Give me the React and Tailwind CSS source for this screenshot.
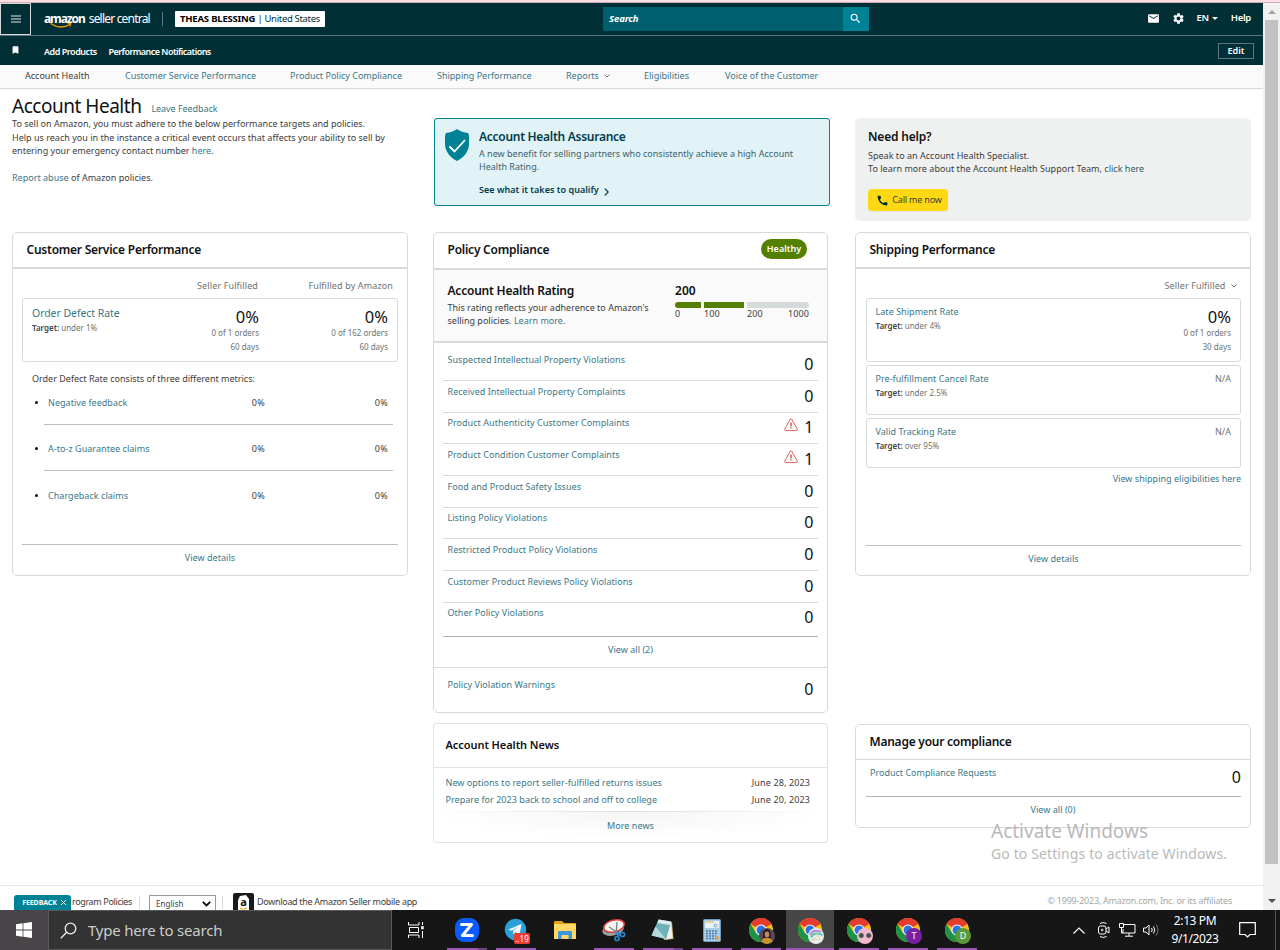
import { MdBookmark, MdCall, MdEmail, MdSearch, MdSettings } from "react-icons/md"

const tabs = [
    "Account Health",
    "Customer Service Performance",
    "Product Policy Compliance",
    "Shipping Performance",
    "Reports",
    "Eligibilities",
    "Voice of the Customer",
]

const violations = [
    { name: "Suspected Intellectual Property Violations", count: 0 },
    { name: "Received Intellectual Property Complaints", count: 0 },
    { name: "Product Authenticity Customer Complaints", count: 1 },
    { name: "Product Condition Customer Complaints", count: 1 },
    { name: "Food and Product Safety Issues", count: 0 },
    { name: "Listing Policy Violations", count: 0 },
    { name: "Restricted Product Policy Violations", count: 0 },
    { name: "Customer Product Reviews Policy Violations", count: 0 },
    { name: "Other Policy Violations", count: 0 },
]

const defectMetrics = ["Negative feedback", "A-to-z Guarantee claims", "Chargeback claims"]

function Chevron({ className }) {
    return (
        <svg className={className} viewBox="0 0 6 4" fill="none" stroke="currentColor">
            <path d="M0.5 0.5 L3 3 L5.5 0.5" />
        </svg>
    )
}

function WarningIcon() {
    return (
        <svg className="w-[14px] h-[13px]" viewBox="0 0 14 13" fill="none" stroke="#dc3c3c">
            <path d="M6.3 1 Q7 0 7.7 1 L13.2 11 Q13.6 12.3 12.5 12.5 L1.5 12.5 Q0.4 12.3 0.8 11 Z" strokeWidth="0.8" />
            <path d="M7 4.5 V8.5 M7 9.3 V10.5" strokeWidth="1.3" />
        </svg>
    )
}

function Header() {
    return (
        <header className="bg-[#002f36] text-white shrink-0">
            <div className="flex h-[33px] border-b border-[#5c777c] items-start">
                <button className="w-[31px] h-[32px] border border-[#d5dbdb] flex items-center justify-center shrink-0">
                    <svg className="w-[10px] h-[8px]" viewBox="0 0 10 8" stroke="#fff">
                        <path d="M0 1 H10 M0 4 H10 M0 7 H10" strokeWidth="0.9" />
                    </svg>
                </button>
                {/* Logo */}
                <div className="relative ml-[13px] w-[118px] h-[31px] flex items-center gap-[4px] text-[12px] whitespace-nowrap">
                    <span className="font-bold tracking-[-1.1px]">amazon</span>
                    <span className="tracking-[-0.8px]">seller central</span>
                    <svg className="absolute left-[6px] top-[20px] w-[22px] h-[6px]" viewBox="0 0 22 6" fill="none" stroke="#ff9900">
                        <path d="M0.5 0.5 Q10 7 20 1.5" strokeWidth="1.3" />
                        <path d="M17.5 0.7 L21 0.5 L20 3.6" strokeWidth="1" />
                    </svg>
                </div>
                <div className="w-px h-[14px] bg-[#5c777c] mt-[9px]" />
                <div className="ml-[12px] mt-[8px] w-[150px] h-[16px] bg-white rounded-[1px] text-black text-[9.5px] leading-[15px] pl-[5px] whitespace-nowrap">
                    <strong className="font-bold tracking-[-0.2px]">THEAS BLESSING</strong>
                    <span className="text-[#002f36] tracking-[-0.32px]"> | United States</span>
                </div>
                <div className="ml-[278px] mt-[4px] h-[24px] flex">
                    <div className="w-[240px] bg-[#005f6e] pl-[6px] leading-[23px] text-[9.5px] tracking-[-0.1px] font-bold italic">Search</div>
                    <div className="w-[26px] bg-[#008296] flex items-center justify-center">
                        <MdSearch className="w-[13px] h-[13px] mr-[2px] mb-[1px]" />
                    </div>
                </div>
                <div className="ml-auto h-[30px] pr-[12px] flex items-center text-[9.5px] font-semibold tracking-[-0.3px]">
                    <MdEmail className="w-[13px] h-[13px]" />
                    <MdSettings className="ml-[12px] w-[13px] h-[13px]" />
                    <span className="ml-[12px]">EN</span>
                    <span className="ml-[3px] w-0 h-0 border-x-[3px] border-x-transparent border-t-[3px] border-t-white" />
                    <span className="ml-[13px]">Help</span>
                </div>
            </div>
            <div className="flex items-center h-[29px] text-[9px] font-semibold whitespace-nowrap">
                <MdBookmark className="ml-[10px] w-[11px] h-[10px] mb-[1px]" />
                <span className="ml-[23px] w-[64.5px] pt-[2px] tracking-[-0.47px]">Add Products</span>
                <span className="pt-[2px] tracking-[-0.54px]">Performance Notifications</span>
                <button className="ml-auto mr-[9px] w-[36px] h-[16px] border border-[#5c777c] flex items-center justify-center">Edit</button>
            </div>
        </header>
    )
}

function Card({ title, badge, className, headClass, children }) {
    return (
        <section className={`border border-[#d5dbdb] rounded-[5px] flex flex-col ${className}`}>
            <div className={`pl-[13.5px] pr-[20px] flex items-center justify-between border-[#d5dbdb] ${headClass}`}>
                <h2 className="text-[12px] leading-[16px] font-semibold tracking-[-0.24px] text-[#111]">{title}</h2>
                {badge}
            </div>
            {children}
        </section>
    )
}

function Rate({ value, orders, days, className }) {
    return (
        <div className={`shrink-0 text-right text-[8px] leading-[14px] tracking-normal text-[#6b7373] ${className}`}>
            <div className="text-[16.5px] leading-[18px] text-[#111]">{value}</div>
            <div>{orders}</div>
            <div>{days}</div>
        </div>
    )
}

function Target({ children }) {
    return <div className="text-[8px] leading-[14px] tracking-normal text-[#6b7373]"><strong className="font-semibold text-[#444]">Target:</strong> {children}</div>
}

function CustomerService() {
    return (
        <Card title="Customer Service Performance" className="h-[344px]" headClass="h-[36px] border-b-2">
            <div className="flex text-[#6b7373] h-[29px] pt-[10px] leading-[14px] text-right tracking-[0.12px]">
                <span className="w-[245px]">Seller Fulfilled</span>
                <span className="w-[135px]">Fulfilled by Amazon</span>
            </div>
            <div className="mx-[9px] h-[64px] border border-[#d5dbdb] rounded-[3px] flex pl-[9px] whitespace-nowrap">
                <div className="pt-[7px]">
                    <div className="text-[10.5px] leading-[15px] tracking-[-0.06px] text-[#3a7886]">Order Defect Rate</div>
                    <Target>under 1%</Target>
                </div>
                <Rate className="ml-auto w-[120px] pt-[9px]" value="0%" orders="0 of 1 orders" days="60 days" />
                <Rate className="w-[129px] pt-[9px] mr-[9px]" value="0%" orders="0 of 162 orders" days="60 days" />
            </div>
            <p className="pl-[19px] mt-[10px] leading-[14px] tracking-normal">Order Defect Rate consists of three different metrics:</p>
            <ul className="ml-[31px] mr-[14px] mt-[10px]">
                {defectMetrics.map(name => (
                    <li key={name} className="h-[29px] mb-[17.3px] border-b border-[#b9bfbf] last:border-b-0 flex items-start leading-[14px]">
                        <span className="w-[3px] h-[3px] rounded-full bg-[#111] -ml-[9px] mt-[5px]" />
                        <span className="ml-[10px] w-[130px] text-[#3a7886]">{name}</span>
                        <span className="w-[87px] text-right tracking-[0.3px]">0%</span>
                        <span className="w-[123px] text-right tracking-[0.3px]">0%</span>
                    </li>
                ))}
            </ul>
            <div className="mt-auto mx-[9px] h-[31px] border-t border-[#b9bfbf] pt-[6px] text-center leading-[14px] text-[#3a7886]">View details</div>
        </Card>
    )
}

function AssuranceBanner() {
    return (
        <div className="ml-px w-[396px] h-[88px] rounded-[3px] border border-[#008296] bg-[#e1f3f7] flex text-[#3d626c]">
            <svg className="ml-[10px] mt-[10px] w-[24px] h-[32px] shrink-0" viewBox="0 0 24 32">
                <path d="M12 0 C15 2.5 19 3.5 23 4 Q24 5 24 8 V15 C24 23 18 29 12 32 C6 29 0 23 0 15 V8 Q0 5 1 4 C5 3.5 9 2.5 12 0 Z" fill="#008296" />
                <path d="M4.5 17.5 L9.5 22.5 L20 11" fill="none" stroke="#fff" strokeWidth="1.8" />
            </svg>
            <div className="ml-[10px] pt-[10px] whitespace-nowrap">
                <h2 className="text-[12px] leading-[16px] font-semibold tracking-[-0.28px] text-[#003b49]">Account Health Assurance</h2>
                <p className="mt-[2px] leading-[13px] tracking-[0.01px]">A new benefit for selling partners who consistently achieve a high Account<br />Health Rating.</p>
                <div className="mt-[10px] leading-[14px] font-semibold text-[#003b49] flex items-center gap-[5px]">
                    See what it takes to qualify
                    <svg className="w-[5px] h-[8px] mt-[3px]" viewBox="0 0 5 8" fill="none" stroke="currentColor">
                        <path d="M0.8 0.6 L4.2 4 L0.8 7.4" strokeWidth="1.3" />
                    </svg>
                </div>
            </div>
        </div>
    )
}

function PolicyCompliance() {
    return (
        <Card
            title="Policy Compliance"
            className="w-[395px] h-[481px] mt-[26px]"
            headClass="h-[37px] pb-[1px] border-b-2"
            badge={<span className="w-[46px] h-[20px] mb-[2px] rounded-full bg-[#538000] text-white text-[9px] font-semibold flex items-center justify-center">Healthy</span>}
        >
            <div className="h-[73px] bg-[#fafafa] border-b-2 border-[#d5dbdb] flex pl-[13.5px] pt-[13px]">
                <div className="w-[227.5px] whitespace-nowrap">
                    <h3 className="text-[12px] leading-[16px] font-semibold tracking-[-0.22px] text-[#111]">Account Health Rating</h3>
                    <p className="mt-[2px] leading-[13px] tracking-[0.01px]">This rating reflects your adherence to Amazon's<br />selling policies. <a className="text-[#3a7886]">Learn more</a>.</p>
                </div>
                <div className="w-[134px]">
                    <div className="text-[12px] leading-[16px] font-semibold text-[#111]">200</div>
                    <div className="mt-[3px] h-[6px] flex gap-[3px]">
                        <span className="w-[26px] bg-[#538000] rounded-l-[3px]" />
                        <span className="w-[40px] bg-[#538000]" />
                        <span className="w-[62px] bg-[#d5dbdb] rounded-r-[3px]" />
                    </div>
                    <div className="flex leading-[12px] tracking-[0.1px]">
                        <span className="w-[29px]">0</span>
                        <span className="w-[43px]">100</span>
                        <span>200</span>
                        <span className="ml-auto">1000</span>
                    </div>
                </div>
            </div>
            <div className="pt-[6.3px] mx-[9px]">
                {violations.map(v => (
                    <div key={v.name} className="h-[31.7px] border-b border-[#d5dbdb] last:border-[#b0b7b7] last:h-[34.1px] flex items-start pl-[4.5px] pr-[4.5px]">
                        <span className="mt-[3.6px] leading-[14px] text-[#3a7886]">{v.name}</span>
                        <span className="ml-auto flex items-center gap-[6px] text-[16px] leading-[18px] mt-[5.7px] text-[#111]">
                            {v.count > 0 && <span className="-mt-[5px]"><WarningIcon /></span>}
                            {v.count}
                        </span>
                    </div>
                ))}
            </div>
            <div className="h-[31px] border-b border-[#d5dbdb] pt-[6px] text-center leading-[14px] text-[#3a7886]">View all (2)</div>
            <div className="flex items-start justify-between pl-[13.5px] pr-[13.5px]">
                <span className="mt-[10px] leading-[14px] text-[#3a7886]">Policy Violation Warnings</span>
                <span className="mt-[12px] text-[16px] leading-[18px] text-[#111]">0</span>
            </div>
        </Card>
    )
}

function News() {
    return (
        <section className="mt-[10px] w-[395px] h-[120px] border border-[#dfe3e3] rounded-[3px]">
            <h2 className="h-[44px] border-b border-[#dfe3e3] pl-[11.5px] text-[11px] leading-[42px] font-semibold tracking-[-0.06px] text-[#111]">Account Health News</h2>
            <div className="pt-[6px] pl-[11.5px] pr-[17px] leading-[17px]">
                <div className="flex justify-between"><span className="text-[#3a7886]">New options to report seller-fulfilled returns issues</span><span className="tracking-[0.12px]">June 28, 2023</span></div>
                <div className="flex justify-between"><span className="text-[#3a7886]">Prepare for 2023 back to school and off to college</span><span className="tracking-[0.12px]">June 20, 2023</span></div>
            </div>
            <div className="mt-[3px] h-px bg-linear-to-r from-white via-[#dcdcdc] to-white" />
            <div className="h-[27px] bg-radial-[at_50%_0%] from-[#f5f5f5] to-white to-70% text-center leading-[28px] text-[#3a7886]">More news</div>
        </section>
    )
}

function ShippingMetric({ name, target, className, children }) {
    return (
        <div className={`mx-[10px] w-[375px] border border-[#d5dbdb] rounded-[3px] flex justify-between pl-[8.5px] pr-[9px] pt-[6px] ${className}`}>
            <div>
                <div className="leading-[14px] text-[#3a7886]">{name}</div>
                <Target>{target}</Target>
            </div>
            {children}
        </div>
    )
}

function Shipping() {
    return (
        <Card title="Shipping Performance" className="mt-[11px] h-[344px]" headClass="h-[36px] border-b-2">
            <div className="h-[29px] pt-[10px] pr-[13.5px] leading-[14px] flex items-start justify-end gap-[5px] text-[#6b7373] tracking-[0.12px]">
                Seller Fulfilled
                <Chevron className="w-[6px] h-[4px] mt-[5px]" />
            </div>
            <ShippingMetric name="Late Shipment Rate" target="under 4%" className="h-[64px]">
                <Rate className="pt-[3px]" value="0%" orders="0 of 1 orders" days="30 days" />
            </ShippingMetric>
            <ShippingMetric name="Pre-fulfillment Cancel Rate" target="under 2.5%" className="h-[50px] mt-[3px]">
                <span className="leading-[14px] text-[#6b7373]">N/A</span>
            </ShippingMetric>
            <ShippingMetric name="Valid Tracking Rate" target="over 95%" className="h-[50px] mt-[3px]">
                <span className="leading-[14px] text-[#6b7373]">N/A</span>
            </ShippingMetric>
            <div className="mt-[4px] pr-[9px] text-right leading-[14px] tracking-[0.02px] text-[#3a7886]">View shipping eligibilities here</div>
            <div className="mt-auto ml-[10px] mr-[9px] h-[30px] border-t border-[#b9bfbf] pt-[6px] text-center leading-[14px] text-[#3a7886]">View details</div>
        </Card>
    )
}

function Footer() {
    return (
        <footer className="mt-auto h-[25px] border-t border-[#e3e6e6] flex items-start whitespace-nowrap shrink-0">
            <div className="ml-[14px] mt-[9px] w-[57px] h-[15px] rounded-t-[3px] bg-[#008296] text-white text-[7px] leading-[15px] font-bold tracking-[-0.1px] pl-[3px] flex justify-center gap-[4px]">
                FEEDBACK
                <svg className="w-[5px] h-[5px] mt-[5px]" viewBox="0 0 5 5" stroke="#fff"><path d="M0 0 L5 5 M5 0 L0 5" strokeWidth="0.9" /></svg>
            </div>
            <span className="ml-px mt-[9px] w-[67px] leading-[14px] tracking-[-0.36px]">rogram Policies</span>
            <span className="w-px h-[13px] mt-[10px] bg-[#d5dbdb]" />
            <div className="ml-[9px] mt-[9px] w-[67px] h-[15px] border border-b-0 border-[#9a9a9a] flex items-start justify-between pl-[6px] pr-[4px] text-[8px] leading-[15px]">
                English
                <svg className="w-[9px] h-[6px] mt-[5px]" viewBox="0 0 9 6" fill="none" stroke="#111"><path d="M0.8 0.8 L4.5 4.5 L8.2 0.8" strokeWidth="1.9" /></svg>
            </div>
            <span className="ml-[6px] w-px h-[13px] mt-[10px] bg-[#d5dbdb]" />
            <svg className="ml-[10px] mt-[7px] w-[21px] h-[17px]" viewBox="0 0 21 17">
                <path d="M0 2 Q0 0 2 0 H19 Q21 0 21 2 V17 H0 Z" fill="#191919" />
                <path d="M7 3 L13 2 L16 6 V17 H5 V7 Z" fill="#fff" />
                <text x="10.5" y="13" fontSize="11" fontWeight="bold" textAnchor="middle" fill="#111" fontFamily="Noto Sans">a</text>
                <path d="M7 15 Q10.500 17.500 14 15" stroke="#ff9900" fill="none" />
            </svg>
            <span className="ml-[3px] mt-[9px] leading-[14px] tracking-[-0.31px]">Download the Amazon Seller mobile app</span>
            <span className="ml-auto mr-[31px] mt-[8px] leading-[14px] tracking-[-0.24px] text-[#a3a8a8]">© 1999-2023, Amazon.com, Inc. or its affiliates</span>
        </footer>
    )
}

function ChromeIcon({ badge }) {
    return (
        <svg className="w-[26px] h-[26px] ml-[2px] mt-[2px]" viewBox="0 0 26 26">
            <circle cx="12" cy="12" r="12" fill="#fbc116" />
            <path d="M12 12 L1.600 6 A12 12 0 0 1 22.400 6 Z" fill="#e33b2e" />
            <path d="M1.600 6 A12 12 0 0 0 12 24 L17 15 L12 12 L7 15 Z" fill="#1e9245" />
            <circle cx="12" cy="12" r="5.600" fill="#fff" />
            <circle cx="12" cy="12" r="4.500" fill="#2a74e8" />
            {badge}
        </svg>
    )
}

function LetterBadge({ letter, color }) {
    return (
        <>
            <circle cx="18" cy="18" r="8" fill={color} />
            <text x="18" y="21.200" fontSize="9" textAnchor="middle" fill="#fff" fontFamily="Noto Sans">{letter}</text>
        </>
    )
}

const photoBadge = (
    <>
        <circle cx="18" cy="18" r="8" fill="#5b4a5c" />
        <path d="M12 23 Q18 16 24 23 Q18 29 12 23 Z" fill="#c9962b" />
        <path d="M14 14 Q18 8 21.500 14 L22 20 H14 Z" fill="#2c1c1a" />
        <ellipse cx="18" cy="16.500" rx="2.300" ry="3" fill="#c08a6d" />
    </>
)

const rainbowBadge = (
    <>
        <circle cx="18" cy="18" r="8" fill="#e8ecea" />
        <path d="M12 17 Q15 10.500 23 14" fill="none" stroke="#b48ad6" strokeWidth="2" />
        <path d="M13 19.500 Q16 13 24.500 17" fill="none" stroke="#63c9b4" strokeWidth="2.200" />
        <path d="M14 22 L20 17.500 L22 21 Z" fill="#f3f3ee" stroke="#d9b796" strokeWidth="0.600" />
    </>
)

const glassesBadge = (
    <>
        <circle cx="18" cy="18" r="8" fill="#f6b8cf" />
        <circle cx="14.300" cy="17.500" r="2.700" fill="#454a50" stroke="#d7c7cc" strokeWidth="0.600" />
        <circle cx="21.700" cy="17.500" r="2.700" fill="#454a50" stroke="#d7c7cc" strokeWidth="0.600" />
    </>
)

const apps = [
    {
        id: "zoom", bar: "split", icon: (
            <svg className="w-[24px] h-[24px]" viewBox="0 0 24 24">
                <rect width="24" height="24" rx="9" fill="#0b5cff" />
                <path d="M6.500 6.500 H16.500 L7.500 17.500 H17.500" fill="none" stroke="#fff" strokeWidth="3" strokeLinejoin="round" strokeLinecap="round" />
            </svg>
        )
    },
    {
        id: "telegram", bar: "full", icon: (
            <svg className="w-[26px] h-[26px] ml-[2px] mt-[2px]" viewBox="0 0 26 26">
                <circle cx="11.500" cy="11.500" r="10.700" fill="#2a9fd8" />
                <path d="M4.500 11.500 L17.500 6 L15.500 17 L11.500 14 L9.500 16.500 L9 13 L14.500 8.500 L7.500 12.800 Z" fill="#fff" />
                <rect x="10" y="15" width="16" height="11" rx="2" fill="#ef3b36" />
                <text x="18" y="23.500" fontSize="8" textAnchor="middle" fill="#fff" fontFamily="Noto Sans">..19</text>
            </svg>
        )
    },
    {
        id: "explorer", bar: "none", icon: (
            <svg className="w-[22px] h-[20px]" viewBox="0 0 22 20">
                <path d="M0 2 Q0 1 1 1 H8 L10 3 H21 Q22 3 22 4 V19 H0 Z" fill="#e3a21a" />
                <rect y="4" width="22" height="15" fill="#ffd866" />
                <path d="M4 19 V12 Q4 11 5 11 H17 Q18 11 18 12 V19 H14.500 V15 H7.500 V19 Z" fill="#3c97dc" />
            </svg>
        )
    },
    {
        id: "snip", bar: "full", icon: (
            <svg className="w-[24px] h-[24px]" viewBox="0 0 24 24" fill="none">
                <ellipse cx="11" cy="11.500" rx="11" ry="6" fill="#98a0a6" transform="rotate(-14 11 11)" />
                <ellipse cx="12" cy="8" rx="10.500" ry="6" fill="#f4f4f4" stroke="#df3a35" strokeWidth="1.500" transform="rotate(-14 12 8)" />
                <path d="M7 9 L18 16 M15 4 L14 17" stroke="#808080" strokeWidth="1.300" />
                <circle cx="15" cy="20.500" r="2.100" stroke="#2a8ad4" strokeWidth="1.500" />
                <circle cx="20.500" cy="16.500" r="2.100" stroke="#2a8ad4" strokeWidth="1.500" />
                <path d="M13.500 15 L18.500 17.500 M17 13 L15.500 18.500" stroke="#2a8ad4" strokeWidth="1.500" />
            </svg>
        )
    },
    {
        id: "notepad", bar: "split", icon: (
            <svg className="w-[24px] h-[22px]" viewBox="0 0 24 22">
                <path d="M8 1 L21 3 L22.500 20 L13 21 Z" fill="#c9b27c" />
                <path d="M20 2.500 L21.500 19 L15 20.500 Z" fill="#f0f0ee" />
                <path d="M7.500 0.500 L20 2.500 L15 20 L0.500 16.500 Z" fill="#6fb0b9" />
                <path d="M7.500 0.500 L20 2.500 L19 6 L6.500 4 Z" fill="#dcecee" />
                <path d="M15 20 L0.500 16.500 L4.500 7.500 Z" fill="#b5dade" />
            </svg>
        )
    },
    {
        id: "calculator", bar: "full", icon: (
            <svg className="w-[18px] h-[23px]" viewBox="0 0 18 23">
                <rect x="0.500" y="0.500" width="17" height="22" rx="1" fill="#a9cbe4" stroke="#6f9dc0" />
                <rect x="2" y="2" width="14" height="7" fill="#e8f3fa" />
                <path d="M2 3 H11" stroke="#f0a840" />
                <circle cx="12.500" cy="6.500" r="1.500" fill="none" stroke="#5c8db5" strokeWidth="0.800" />
                <path d="M3 12 H15 M3 14.500 H15 M3 17 H13 M3 19.500 H13" stroke="#4a80ad" strokeWidth="1.500" strokeDasharray="2 1" />
                <rect x="13.500" y="17" width="2" height="4" fill="#f0a020" />
            </svg>
        )
    },
    { id: "chrome-1", bar: "full", icon: <ChromeIcon badge={photoBadge} /> },
    { id: "chrome-2", bar: "active", icon: <ChromeIcon badge={rainbowBadge} /> },
    { id: "chrome-3", bar: "full", icon: <ChromeIcon badge={glassesBadge} /> },
    { id: "chrome-4", bar: "full", icon: <ChromeIcon badge={<LetterBadge letter="T" color="#7b1fa2" />} /> },
    { id: "chrome-5", bar: "full", icon: <ChromeIcon badge={<LetterBadge letter="D" color="#5b9a36" />} /> },
]

function Taskbar() {
    return (
        <div className="h-[40px] bg-[#161616] flex text-white shrink-0">
            <div className="w-[48px] bg-[#4a4548] flex items-center justify-center">
                <svg className="w-[16px] h-[16px]" viewBox="0 0 16 16" fill="#fff">
                    <path d="M0 2.200 L6.600 1.300 V7.600 H0 Z M7.400 1.200 L16 0 V7.600 H7.400 Z M0 8.400 H6.600 V14.700 L0 13.800 Z M7.400 8.400 H16 V16 L7.400 14.800 Z" />
                </svg>
            </div>
            <div className="w-[344px] bg-[#333] border border-[#5a5a5a] flex items-center pl-[11px]">
                <svg className="w-[17px] h-[17px]" viewBox="0 0 17 17" fill="none" stroke="#eee">
                    <circle cx="10.500" cy="6.500" r="5.300" strokeWidth="1.300" />
                    <path d="M6.700 10.300 L0.800 16.200" strokeWidth="1.300" />
                </svg>
                <span className="ml-[11px] text-[15px] text-[#ccc] tracking-[-0.2px]">Type here to search</span>
            </div>
            <div className="w-[51px] flex items-center pl-[16px]">
                <svg className="w-[16px] h-[16px]" viewBox="0 0 16 16" fill="none" stroke="#fff">
                    <path d="M0.500 0 V3 H11 V0 M0.500 16 V13 H11 V16 M1.500 5.500 H10.500 V10.500 H1.500 Z M14.500 0 V3 M14.500 9 V16" />
                    <rect x="13.500" y="4.500" width="2" height="2.500" fill="#fff" strokeWidth="0.5" />
                </svg>
            </div>
            <div className="flex gap-px">
                {apps.map(app => (
                    <div key={app.id} className={`w-[48px] h-[40px] flex flex-col items-center ${app.bar === "active" ? "bg-[#474747]" : ""}`}>
                        <div className="h-[38px] pt-[2px] flex items-center">{app.icon}</div>
                        {app.bar === "full" && <div className="w-[40px] h-[2px] bg-[#9a57b8]" />}
                        {app.bar === "active" && <div className="w-[48px] h-[2px] bg-[#9a57b8]" />}
                        {app.bar === "split" && <div className="w-[40px] h-[2px] bg-[#9a57b8] border-r-[9px] border-[#6d4383]" />}
                    </div>
                ))}
            </div>
            {/* System tray */}
            <div className="ml-auto flex items-center">
                <svg className="w-[12px] h-[7px]" viewBox="0 0 12 7" fill="none" stroke="#fff"><path d="M0.500 6.500 L6 1 L11.500 6.500" strokeWidth="1.200" /></svg>
                <svg className="ml-[13px] w-[12px] h-[16px]" viewBox="0 0 12 16" fill="none" stroke="#fff">
                    <path d="M2 1.500 Q5 -0.500 8.500 1.500 M2 14.500 Q5 16.500 8.500 14.500" />
                    <rect x="0.500" y="4" width="7.500" height="8" rx="2" />
                    <path d="M8 7 L11 5 V11 L8 9" />
                    <circle cx="4.200" cy="8" r="0.800" />
                </svg>
                <svg className="ml-[9px] w-[17px] h-[14px]" viewBox="0 0 17 14" fill="none" stroke="#fff">
                    <path d="M5 1.500 H16 V10 H4 V6 M0.500 0.500 H4.500 V4.500 H0.500 Z M2.500 4.500 V10 H4 M10 10 V13 M6 13.200 H14" />
                </svg>
                <svg className="ml-[7px] w-[17px] h-[14px]" viewBox="0 0 17 14" fill="none" stroke="#fff">
                    <path d="M0.500 5 H3 L6 2 V12 L3 9 H0.500 Z M8.500 5 Q10 7 8.500 9 M10.500 3.500 Q13 7 10.500 10.500" />
                    <path d="M13 1.500 Q17 7 13 12.500" stroke="#777" />
                </svg>
                <div className="w-[70px] text-center text-[12px] leading-[18px] tracking-[-0.4px] whitespace-nowrap">
                    <div>2:13 PM</div>
                    <div>9/1/2023</div>
                </div>
                <svg className="ml-[9px] w-[17px] h-[16px]" viewBox="0 0 17 16" fill="none" stroke="#fff">
                    <path d="M0.700 0.700 H16.300 V12.500 H11 L8.500 15 L6 12.500 H0.700 Z" strokeWidth="1.200" />
                </svg>
                <div className="ml-[19px] mr-[4px] w-px h-[40px] bg-[#555]" />
            </div>
        </div>
    )
}

export default function App() {
    return (
        <div className="relative w-[1280px] h-[950px] flex flex-col overflow-hidden bg-white text-[9px] tracking-[0.04px] text-[#3c3c3c] font-['Noto_Sans',sans-serif]">
            <div className="h-[3px] bg-[#ffdfe6] border-b border-[#cfaeb7] shrink-0" />
            <div className="flex h-[907px] shrink-0">
                <main className="w-[1263px] flex flex-col">
                    <Header />
                    <nav className="h-[24px] bg-[#fafafa] border-b border-[#d5d9d9] pl-[25px] grid grid-cols-[100px_165px_147px_129px_78px_81px_1fr] leading-[22px] tracking-normal text-[#3a7886] whitespace-nowrap shrink-0">
                        {tabs.map((tab, i) => (
                            <span key={tab} className={i === 0 ? "text-[#3c3c3c]" : ""}>
                                {tab}
                                {tab === "Reports" && <Chevron className="inline-block ml-[5px] mb-[2px] w-[6px] h-[4px] text-[#777]" />}
                            </span>
                        ))}
                    </nav>
                    <div className="flex pl-[12px] pr-[12px]">
                        {/* Left column */}
                        <div className="w-[396px] pt-[5px]">
                            <div className="flex items-start h-[23px] whitespace-nowrap">
                                <h1 className="text-[19px] leading-[24px] tracking-[-0.48px] text-[#111]">Account Health</h1>
                                <a className="ml-[10px] mt-[8px] leading-[14px] tracking-[-0.05px] text-[#3a7886]">Leave Feedback</a>
                            </div>
                            <p className="h-[115px] leading-[13.5px] tracking-[0.01px] whitespace-nowrap">
                                To sell on Amazon, you must adhere to the below performance targets and policies.<br />
                                Help us reach you in the instance a critical event occurs that affects your ability to sell by<br />
                                entering your emergency contact number <a className="text-[#3a7886]">here</a>.<br />
                                <br />
                                <a className="text-[#3a7886]">Report abuse</a> of Amazon policies.
                            </p>
                            <CustomerService />
                        </div>
                        {/* Middle column */}
                        <div className="ml-[25px] w-[397px] pt-[29px]">
                            <AssuranceBanner />
                            <PolicyCompliance />
                            <News />
                        </div>
                        {/* Right column */}
                        <div className="ml-[25px] w-[396px] pt-[29px]">
                            <div className="h-[103px] rounded-[5px] bg-[#eff1f1] pl-[13px] pt-[11px] whitespace-nowrap">
                                <h2 className="text-[12px] leading-[16px] font-semibold tracking-[-0.2px] text-[#111]">Need help?</h2>
                                <p className="mt-[4px] leading-[13px] tracking-[0.02px]">Speak to an Account Health Specialist.<br />To learn more about the Account Health Support Team, <a className="text-[#2f5a66]">click here</a></p>
                                <button className="mt-[14px] w-[80px] h-[22px] rounded-[4px] bg-[#ffd814] flex items-center justify-center gap-[3px] pl-[2px] tracking-[-0.2px] shadow-xs">
                                    <MdCall className="w-[13px] h-[13px] text-[#002f36]" />
                                    Call me now
                                </button>
                            </div>
                            <Shipping />
                            <Card title="Manage your compliance" className="mt-[148px] h-[104px]" headClass="h-[35px] border-b">
                                <div className="ml-[10px] mr-[9px] h-[37px] border-b border-[#b0b7b7] flex items-start justify-between pl-[4px]">
                                    <span className="mt-[6px] leading-[14px] tracking-normal text-[#3a7886]">Product Compliance Requests</span>
                                    <span className="mt-[8px] text-[16px] leading-[18px] text-[#111]">0</span>
                                </div>
                                <div className="pt-[6px] text-center leading-[14px] text-[#3a7886]">View all (0)</div>
                            </Card>
                        </div>
                    </div>
                    <Footer />
                </main>
                {/* Scrollbar */}
                <div className="w-[17px] bg-[#f1f1f1] flex flex-col items-center">
                    <span className="mt-[7px] w-0 h-0 border-x-[4px] border-x-transparent border-b-[4px] border-b-[#a3a3a3]" />
                    <div className="mt-[6px] w-[13px] h-[844px] bg-[#c1c1c1]" />
                    <span className="mt-[35px] w-0 h-0 border-x-[4px] border-x-transparent border-t-[4px] border-t-[#505050]" />
                </div>
            </div>
            <Taskbar />
            {/* Activation watermark */}
            <div className="absolute left-[991px] top-[819px] text-[#b9b9b9] whitespace-nowrap">
                <div className="text-[19px] leading-[24px] tracking-normal">Activate Windows</div>
                <div className="text-[14px] leading-[21px] tracking-[0.12px]">Go to Settings to activate Windows.</div>
            </div>
        </div>
    )
}
